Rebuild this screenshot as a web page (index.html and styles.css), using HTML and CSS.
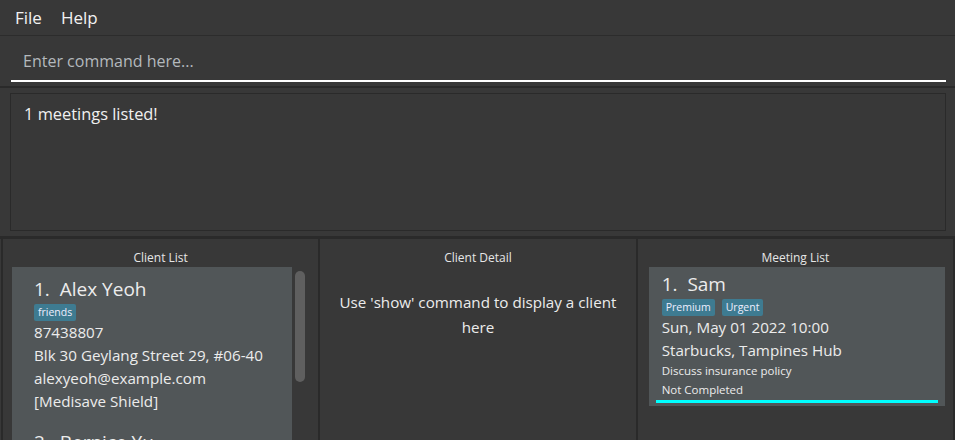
FILE: index.html
```html
<!DOCTYPE html>
<html>
<head>
<meta charset="utf-8">
<link rel="stylesheet" href="styles.css">
</head>
<body>
<div class="app">
  <div class="menubar">
    <span class="menu-item">File</span>
    <span class="menu-item">Help</span>
  </div>
  <div class="command">
    <div class="command-input">Enter command here...</div>
  </div>
  <div class="result">
    <div class="result-box">1 meetings listed!</div>
  </div>
  <div class="panels">
    <section class="panel">
      <div class="panel-title">Client List</div>
      <div class="list-area">
        <div class="list">
          <div class="card client-card">
            <div class="name">1.&nbsp; Alex Yeoh</div>
            <div class="tags"><span class="tag">friends</span></div>
            <div class="line">87438807</div>
            <div class="line">Blk 30 Geylang Street 29, #06-40</div>
            <div class="line">alexyeoh@example.com</div>
            <div class="line">[Medisave Shield]</div>
          </div>
          <div class="card client-card">
            <div class="name">2.&nbsp; Bernice Yu</div>
          </div>
        </div>
        <div class="scrollbar"><div class="thumb"></div></div>
      </div>
    </section>
    <section class="panel">
      <div class="panel-title">Client Detail</div>
      <div class="detail-msg">Use 'show' command to display a client here</div>
    </section>
    <section class="panel panel-last">
      <div class="panel-title">Meeting List</div>
      <div class="meeting-list">
        <div class="card meeting-card">
          <div class="name">1.&nbsp; Sam</div>
          <div class="tags"><span class="tag">Premium</span><span class="tag">Urgent</span></div>
          <div class="line">Sun, May 01 2022 10:00</div>
          <div class="line">Starbucks, Tampines Hub</div>
          <div class="small">Discuss insurance policy</div>
          <div class="small">Not Completed</div>
          <div class="progress"></div>
        </div>
      </div>
    </section>
  </div>
</div>
</body>
</html>
```

FILE: styles.css
```css
* { box-sizing: border-box; }
html, body {
  margin: 0;
  padding: 0;
  width: 955px;
  height: 440px;
  overflow: hidden;
  background: #383838;
  font-family: "Open Sans", "Noto Sans", sans-serif;
  color: #e8e8e8;
}
.app {
  display: flex;
  flex-direction: column;
  height: 440px;
}
.menubar {
  height: 36px;
  border-bottom: 1px solid #2c2c2c;
  display: flex;
  align-items: center;
  padding-left: 15px;
  gap: 19px;
  font-size: 17px;
  color: #f2f2f2;
}
.command {
  padding: 4px 9px 4px 11px;
  border-bottom: 2px solid #2a2a2a;
}
.command-input {
  height: 42px;
  line-height: 42px;
  padding-left: 12px;
  font-size: 16px;
  color: #b4b9bd;
  border-bottom: 2px solid #ffffff;
}
.result {
  padding: 5px 9px 5px 10px;
  border-bottom: 3px solid #2a2a2a;
}
.result-box {
  height: 138px;
  border: 1px solid #2a2a2a;
  padding: 8px 13px;
  font-size: 16.4px;
  color: #f0f0f0;
}
.panels {
  flex: 1;
  display: flex;
  padding-left: 1px;
  min-height: 0;
}
.panel {
  flex: 1;
  border-left: 2px solid #2a2a2a;
  display: flex;
  flex-direction: column;
  min-width: 0;
}
.panel-last {
  border-right: 2px solid #2a2a2a;
}
.panel-title {
  padding-top: 10px;
  height: 28px;
  line-height: 18px;
  text-align: center;
  font-size: 12px;
  color: #e6e6e6;
}
.list-area {
  display: flex;
  padding-left: 9px;
  flex: 1;
  min-height: 0;
}
.list {
  width: 280px;
  background: #515658;
  overflow: hidden;
}
.scrollbar {
  width: 13px;
  padding: 4px 0 0 3px;
}
.thumb {
  width: 10px;
  height: 111px;
  border-radius: 5px;
  background: #5f5f5f;
}
.card {
  background: #515658;
}
.client-card {
  padding: 8px 10px 7px 22px;
}
.name {
  font-size: 19px;
  line-height: 28px;
  color: #ececec;
}
.tags {
  display: flex;
  gap: 7px;
  padding: 1px 0 0;
}
.tag {
  background: #3e7b91;
  color: #eef;
  font-size: 10.5px;
  line-height: 17px;
  padding: 0 4px;
  border-radius: 2px;
}
.line {
  font-size: 15.2px;
  line-height: 23px;
  color: #ececec;
  white-space: nowrap;
}
.small {
  font-size: 11.5px;
  line-height: 18.5px;
  color: #ececec;
}
.detail-msg {
  text-align: center;
  font-size: 15.2px;
  line-height: 25px;
  padding: 23px 18px 0;
  color: #ececec;
}
.meeting-list {
  padding: 0 8px 0 11px;
}
.meeting-card {
  padding: 3px 7px 3px 13px;
}
.meeting-card .tags {
  padding: 1px 0 0;
}
.progress {
  height: 3px;
  background: #00ffff;
  margin: 1px 0 0 -6px;
}
```
